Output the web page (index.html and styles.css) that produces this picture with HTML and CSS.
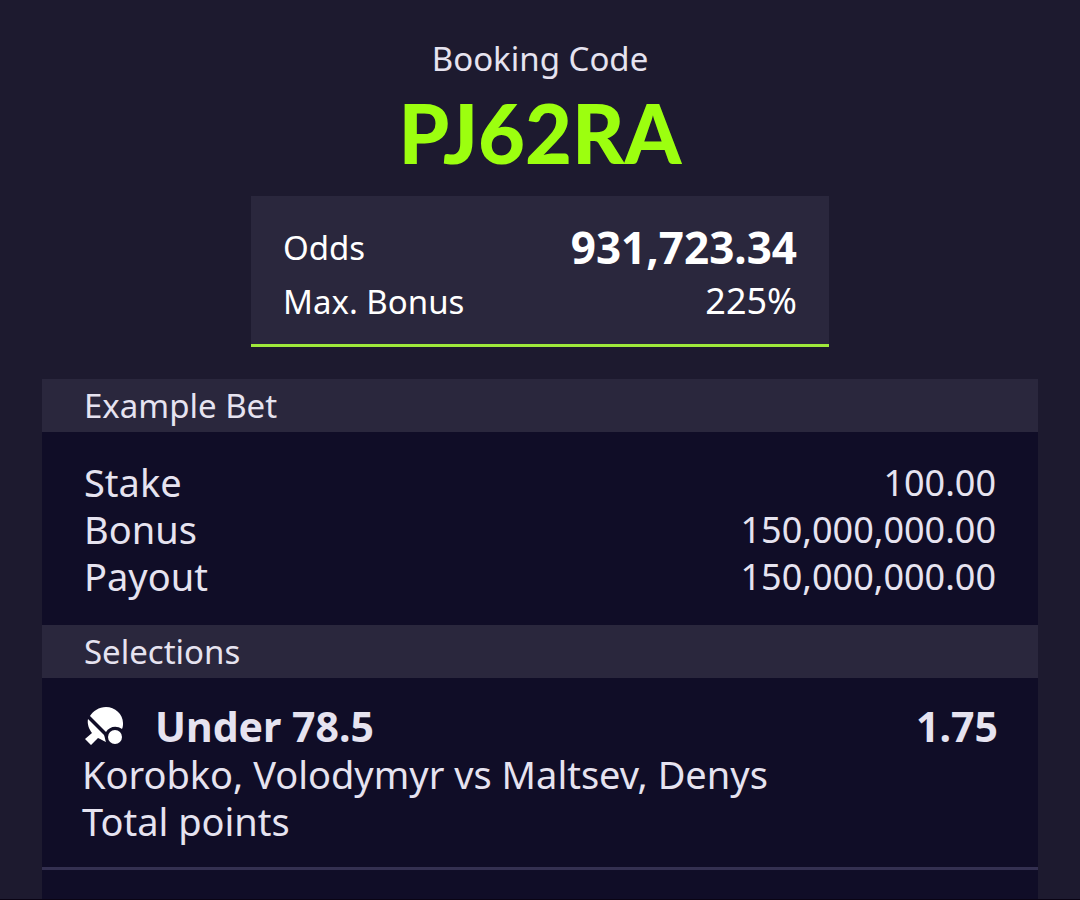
FILE: index.html
```html
<!DOCTYPE html>
<html lang="en">
<head>
  <meta charset="UTF-8">
  <meta name="viewport" content="width=device-width, initial-scale=1">
  <title>Booking Code</title>
  <link rel="stylesheet" href="styles.css">
</head>
<body>

  <!-- HEADER -->
  <header class="booking">
    <p class="booking-label">Booking Code</p>
    <h1 class="booking-code">PJ62RA</h1>
    <dl class="summary">
      <div class="row">
        <dt>Odds</dt>
        <dd class="odds-total">931,723.34</dd>
      </div>
      <div class="row">
        <dt>Max. Bonus</dt>
        <dd>225%</dd>
      </div>
    </dl>
  </header>

  <!-- BET SLIP -->
  <main class="slip">
    <section>
      <h2>Example Bet</h2>
      <dl class="amounts">
        <div class="row"><dt>Stake</dt><dd>100.00</dd></div>
        <div class="row"><dt>Bonus</dt><dd>150,000,000.00</dd></div>
        <div class="row"><dt>Payout</dt><dd>150,000,000.00</dd></div>
      </dl>
    </section>

    <section>
      <h2>Selections</h2>
      <ul class="selections">
        <li>
          <div class="pick">
            <svg class="sport" viewBox="0 0 38 38" aria-hidden="true">
              <use href="#table-tennis"/>
            </svg>
            <h3>Under 78.5</h3>
            <span class="odds">1.75</span>
          </div>
          <p>Korobko, Volodymyr vs Maltsev, Denys</p>
          <p>Total points</p>
        </li>
        <li>
          <div class="pick">
            <svg class="sport" viewBox="0 0 38 38" aria-hidden="true">
              <use href="#table-tennis"/>
            </svg>
          </div>
        </li>
      </ul>
    </section>
  </main>

  <!-- ICONS -->
  <svg class="sprite" aria-hidden="true">
    <symbol id="table-tennis" viewBox="0 0 38 38">
      <path d="M5 9C8 4 14 0 21 0C30 0 38 7 38 16C38 18 38 20 37 22C31 18 24 20 21 25Z"/>
      <path d="M3 12L19 28C20 30 20 33 21 35C18 34 16 32 13 31L6 38L0 32L7 26C4 22 2 17 3 12Z"/>
      <circle cx="30" cy="30" r="7"/>
    </symbol>
  </svg>

</body>
</html>
```
FILE: styles.css
```css
* {box-sizing:border-box; margin:0; padding:0;}
body {
  height:100vh; overflow:hidden;
  background:#1d1a2f; color:#e6e3f0;
  font-family:'Noto Sans','Open Sans',sans-serif;
  border-bottom:1px solid #0a0414;
}
ul {list-style:none;}

.row {display:flex; justify-content:space-between; align-items:center;}

/* header */
.booking {
  display:flex; flex-direction:column; align-items:center;
  padding:36px 24px 32px;
}
.booking-label {font-size:33px; line-height:46px;}
.booking-code {
  font-family:'Lato','Noto Sans',sans-serif;
  font-size:81px; line-height:102px; font-weight:900;
  color:#9cff0f;
}
.summary {
  width:100%; max-width:578px; margin-top:12px; padding:24px 32px 16px;
  background:#2a273d; color:#fff;
  border-bottom:3px solid #9fe93b;
}
.summary .row {height:54px;}
.summary dt {font-size:33px;}
.summary dd {font-size:36px; line-height:52px;}
.summary .odds-total {font-size:44px; font-weight:700;}

/* slip */
.slip {margin:0 42px; background:#100d27;}
h2 {
  padding:0 42px;
  font-size:33px; line-height:53px; font-weight:400;
  background:#2a273d;
}
.amounts {padding:27px 42px 25px; font-size:38px; line-height:47px;}
.amounts dd {font-size:36px;}

/* selections */
.selections li {
  padding:23px 40px 22px;
  border-bottom:3px solid #343051;
  font-size:38px; line-height:47px;
}
.pick {display:flex; align-items:center; height:50px;}
.pick h3 {margin-left:32px; font-size:41px; font-weight:700;}
.sport {width:38px; height:38px; margin-left:3px; fill:#fff;}
.odds {margin-left:auto; font-size:41px; font-weight:700;}
.sprite {display:none;}
```
